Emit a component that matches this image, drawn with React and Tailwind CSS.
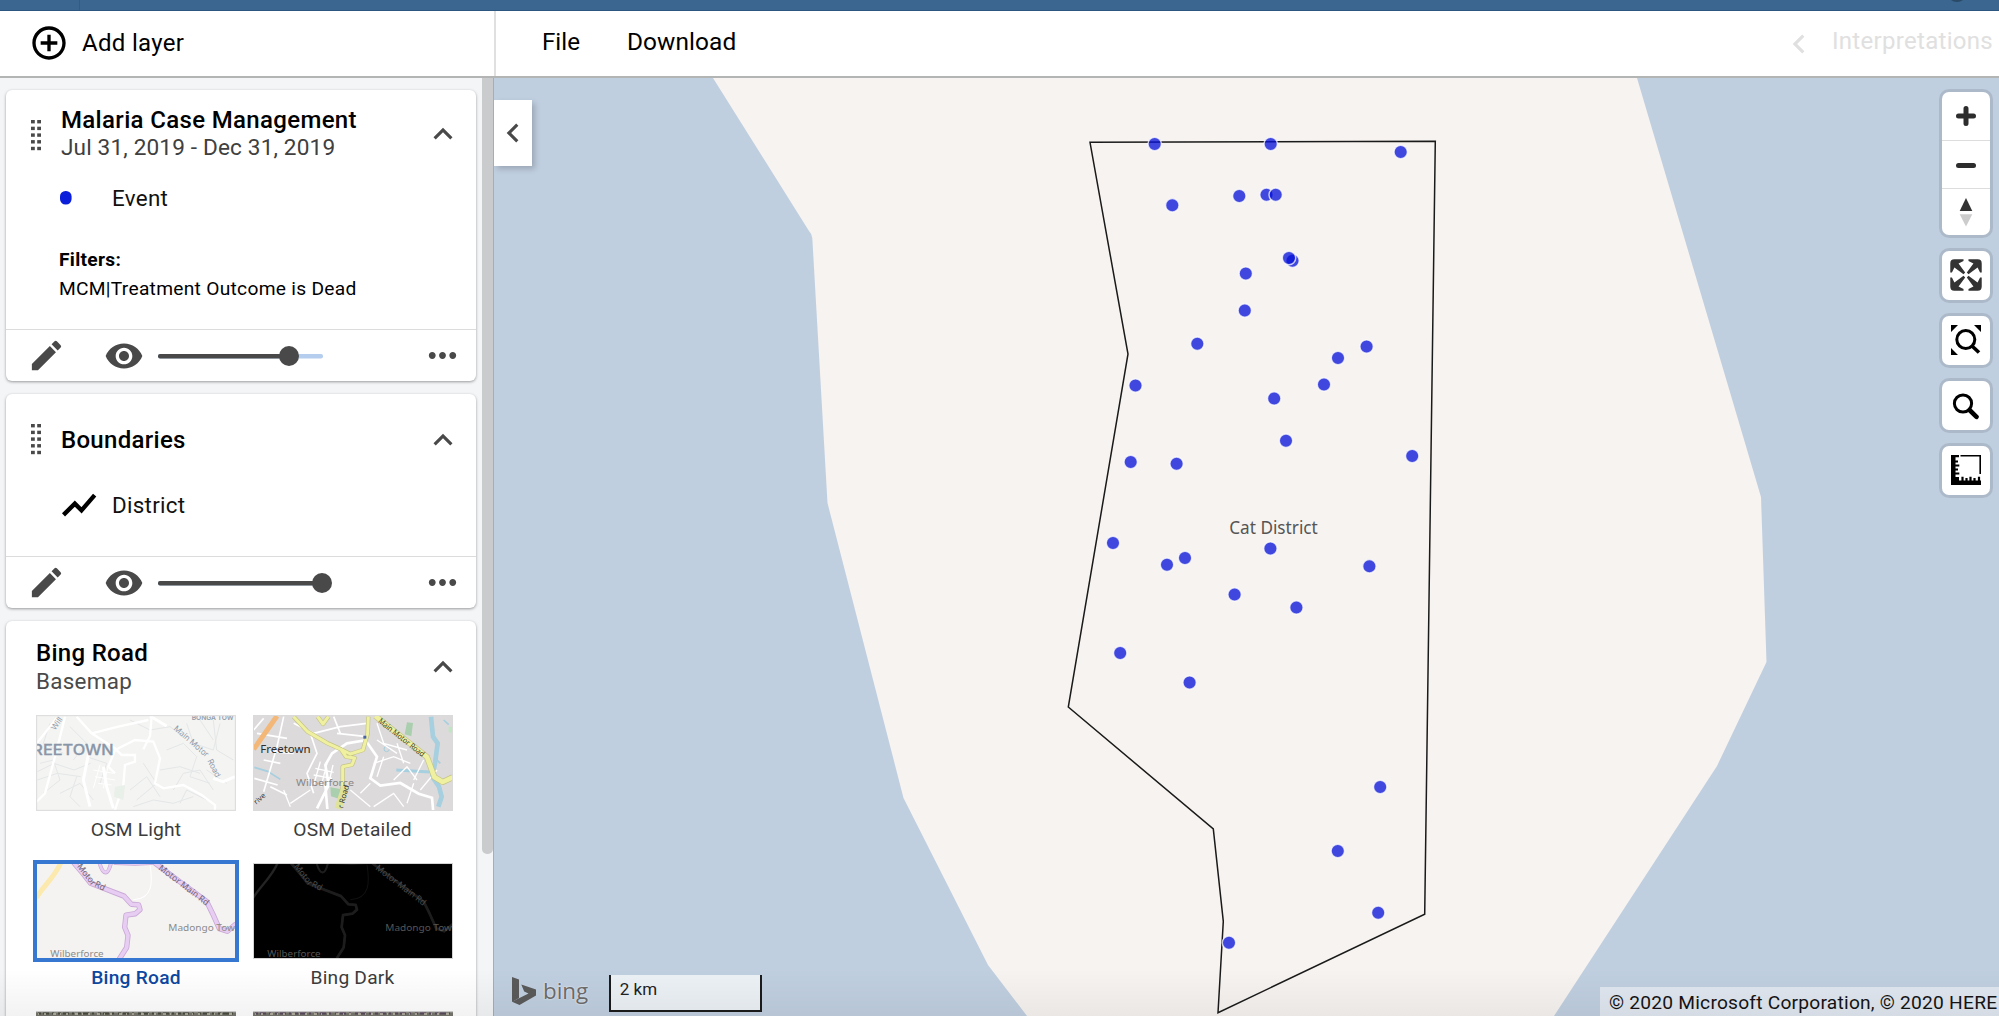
import React from "react";
import {
  MdAddCircleOutline,
  MdCreate,
  MdExpandLess,
  MdChevronLeft,
  MdMoreHoriz,
  MdVisibility,
} from "react-icons/md";

const EVENTS = [
  [1154.7, 144], [1270.7, 144], [1400.7, 152], [1172.3, 205.3], [1239.3, 196],
  [1266.5, 194.7], [1275.7, 194.7], [1292.5, 260.7], [1289, 258], [1245.8, 273.6],
  [1244.8, 310.5], [1197.3, 343.7], [1135.5, 385.6], [1366.6, 346.6], [1338, 358],
  [1324, 384.4], [1274.2, 398.4], [1286, 440.7], [1130.7, 462], [1176.6, 463.7],
  [1412.2, 456], [1113, 543], [1167, 564.8], [1185, 558], [1270.4, 548.6],
  [1369.4, 566.3], [1234.6, 594.4], [1296.4, 607.4], [1120.2, 653], [1189.6, 682.6],
  [1380.2, 787], [1337.8, 851], [1378.2, 912.8], [1229, 942.8],
];

function DragHandle() {
  return (
    <svg width="11" height="32" viewBox="0 0 11 32" fill="#4a4a4a" className="shrink-0">
      {[0, 1, 2, 3, 4].map((r) => (
        <g key={r}>
          <rect x="0" y={r * 6.7} width="3.8" height="3.4" />
          <rect x="6.2" y={r * 6.7} width="3.8" height="3.4" />
        </g>
      ))}
    </svg>
  );
}

function LayerActions({ full }) {
  return (
    <div className="flex h-[52px] items-center border-t border-[#dcdcdc] pl-[21px] pr-[13px] text-[#494949]">
      <MdCreate size={39} />
      <MdVisibility size={40} className="ml-[38px]" />
      <svg width="184" height="24" viewBox="0 0 184 24" className="ml-[12px]">
        <rect x="2" y="10" width="165" height="4.5" rx="2" fill="#b5cdee" />
        <rect x="2" y="10" width={full ? 165 : 132} height="4.5" rx="2" fill="#494949" />
        <circle cx={full ? 166 : 133} cy="12" r="10" fill="#494949" />
      </svg>
      <MdMoreHoriz size={41} className="ml-auto" />
    </div>
  );
}

function Card({ className, children }) {
  return (
    <section className={"flex shrink-0 flex-col rounded-[6px] bg-white shadow-[0_1px_3px_rgba(0,0,0,0.38)] " + className}>
      {children}
    </section>
  );
}

function OsmLight() {
  return (
    <svg viewBox="108 75 600 288" className="h-full w-full" preserveAspectRatio="none">
      <rect x="108" y="75" width="600" height="288" fill="#f4f4f2" />
      <g fill="none" stroke="#e4e7e8" strokeWidth="3">
        <path d="M112 245l50-25 60 20 50-20M112 270l60-20 70 10M120 220l40-10 20 60-50 40M230 260l-20 60 30 30M390 90l60 30 60-10 40 30M500 180l50-20 40 40-20 60 60 20M560 100l20 60 60 20 20-80M600 90l40 60M390 300l50-40 40 60M480 240l60-10 60 20M400 350l60-20 60 10 60-20M620 240l60 40M260 200l60 20-20 60M210 110l50 50-40 50" />
        <path d="M520 300l30-50 50-10 40 60M430 220l40 60-60 50M150 100l-20 60 60 30M540 340l20-40 60 30M640 90l10 90 50 30M180 310l60-30 40 50" />
      </g>
      <g fill="none" stroke="#ffffff" strokeWidth="7">
        <path d="M110 160l60-75M195 80l-30 120-30 110-25 25M230 80l45 50 70 45 20 20 40 0 0 20-30 10-5 60-30 90" />
        <path d="M455 78l-5 60-20 40M275 130l80-20 90-20M345 250l-20-20 20-50 60-30 55 5 20 50-15 75 25 15 60-10 55 30 40 30 0 50" />
        <path d="M450 78l50 30M640 265l30 10 35-15M270 350l-20-80 20-100M310 230l10 60 20 65" strokeWidth="9" />
        <path d="M280 240l60 10M285 260l60 10M295 280l40 5M300 225l-20 70M325 225l-15 70" strokeWidth="3" />
      </g>
      <path d="M345 290l30-5-5 45-28-10z" fill="#e9efe9" />
      <g fill="#8f9bab" fontFamily="Inter, sans-serif">
        <text x="97" y="194" fontSize="43" fontWeight="500" textLength="244" lengthAdjust="spacingAndGlyphs" fill="#8996a8" stroke="#8996a8" strokeWidth="0.8">REETOWN</text>
        <text transform="translate(520 118) rotate(41)" fontSize="24">Main Motor</text>
        <text transform="translate(622 212) rotate(64)" fontSize="24">Road</text>
        <text x="575" y="90" fontSize="20" fontWeight="600">BONGA TOW</text>
        <text transform="translate(165 122) rotate(-55)" fontSize="24">Will</text>
      </g>
      <rect x="109" y="76" width="598" height="286" fill="none" stroke="#dedede" strokeWidth="5" />
    </svg>
  );
}

function OsmDetailed() {
  return (
    <svg viewBox="758 75 600 288" className="h-full w-full" preserveAspectRatio="none">
      <rect x="758" y="75" width="600" height="288" fill="#dddadb" />
      <path d="M1220 97l18 2-5 40-20-6zM990 292l30 5-2 30-26-8z" fill="#a9cfae" />
      <path d="M1345 110l12 0 0 20-12-4z" fill="#bfe6c0" />
      <g fill="none" stroke="#a6cfdf">
        <path d="M1292 80l6 60 14 20-8 60-8 40 20 30 8 30-10 30" strokeWidth="14" />
        <path d="M1188 240l100 6" strokeWidth="9" />
        <path d="M762 232l40 12 38 24" strokeWidth="5" />
        <circle cx="1159" cy="177" r="8" strokeWidth="3" />
        <path d="M1330 90l15 14M1305 205l15 15" strokeWidth="5" />
      </g>
      <g fill="none" stroke="#ffffff" strokeWidth="5">
        <path d="M850 80l-20 90-40 135M790 85l-30 35M770 130l90 15M880 190l-70-5M762 265l70 20M810 290l50 25M840 220l-50-10" strokeWidth="5" />
        <path d="M940 130l80-20 80-10M930 130l20 60-30 60 20 60M880 100l60 30M1010 130l90 10M1000 80l20 50" />
        <path d="M1120 220l60-20 50 20M1150 200l-20 60M1190 160l20 60M1180 270l40-40 30 40M1260 300l50-60M1130 150l60 40M1130 100l20 60 70 20" strokeWidth="4" />
        <path d="M1080 310l30-30M1120 350l60-40 30 40M870 340l60-40M850 300l20 50M1050 300l60 50M1240 280l-20 60M1270 210l-30 60" strokeWidth="4" />
        <path d="M960 215l-20 70M980 220l-18 70M998 225l-14 60M945 235l55 12M940 255l55 10" strokeWidth="4" />
        <path d="M1100 150l-60 10-45 30-20 35 10 60-35 70M975 285l6 72M1095 150l35 50-20 65 30 22 60-8 55 32 40 12 4 45" strokeWidth="8" />
      </g>
      <g fill="none" strokeLinejoin="round">
        <path d="M830 78l-70 100" stroke="#f3b778" strokeWidth="15" />
        <path d="M880 80l42 45 60 35 40 18 28 14 38-12 14-50 2-50M1022 178l15 22 26 4-8 20-28 6 0 60-10 66M952 80l16 22 16-22" stroke="#c4c486" strokeWidth="13" />
        <path d="M880 80l42 45 60 35 40 18 28 14 38-12 14-50 2-50M1022 178l15 22 26 4-8 20-28 6 0 60-10 66M952 80l16 22 16-22" stroke="#f0f1a0" strokeWidth="9" />
        <path d="M1125 78l60 48 95 75 22 60 25 15 30-14" stroke="#c4c486" strokeWidth="18" />
        <path d="M1125 78l60 48 95 75 22 60 25 15 30-14" stroke="#f0f1a0" strokeWidth="14" />
        <path d="M1035 290l-22 66" stroke="#dfe39a" strokeWidth="22" />
      </g>
      <rect x="1089" y="137" width="9" height="9" fill="#4864a8" />
      <g fill="#333" fontFamily="'Noto Sans', sans-serif">
        <text x="780" y="188" fontSize="31" textLength="151" lengthAdjust="spacingAndGlyphs" fill="#2c2c2c">Freetown</text>
        <text x="887" y="288" fontSize="29" textLength="174" lengthAdjust="spacingAndGlyphs" fill="#878787">Wilberforce</text>
        <text transform="translate(1132 96) rotate(38.500)" fontSize="24" textLength="170" lengthAdjust="spacingAndGlyphs" fill="#45452a">Main Motor Road</text>
        <text transform="translate(1028 356) rotate(-75)" fontSize="23">r Road</text>
        <text transform="translate(768 344) rotate(-40)" fontSize="22">rive</text>
      </g>
      <rect x="759" y="76" width="598" height="286" fill="none" stroke="#dadada" strokeWidth="4" />
    </svg>
  );
}

function BingThumb({ dark }) {
  const edge = dark ? "#1d1d1d" : "#c9a9d6";
  const road = dark ? "#1d1d1d" : "#e8cdf3";
  const label = dark ? "#555555" : "#8b8b8b";
  const roads =
    "M222 520l30 35 20 25 100 38 22 24 22 2 4 14-14 12-28 4-4 36 10 24-4 36-22 34M465 520l70 52 85 62 18 36 20 44 24 8 24-20";
  return (
    <svg viewBox="108 520 600 284" className="h-full w-full" preserveAspectRatio="none">
      <rect x="108" y="520" width="600" height="284" fill={dark ? "#000000" : "#f5f3f2"} />
      <path d="M182 520c-20 45-50 65-74 104" fill="none" stroke={dark ? "#242424" : "#fbe9ae"} strokeWidth={dark ? 7 : 15} />
      <path d="M450 525c8 50 10 100-50 104" fill="none" stroke={dark ? "#111111" : "#ffffff"} strokeWidth="3" />
      <g fill="none" strokeLinejoin="round" strokeLinecap="round">
        <path d={roads} stroke={edge} strokeWidth={dark ? 8 : 16} />
        <path d="M298 518c6 22 12 30 19 30s12-12 16-28M345 520l60 2 50-2" stroke={edge} strokeWidth={dark ? 6 : 12} />
        <path d={roads} stroke={road} strokeWidth={dark ? 6 : 11} />
        <path d="M298 518c6 22 12 30 19 30s12-12 16-28M345 520l60 2 50-2" stroke={road} strokeWidth={dark ? 4 : 8} />
      </g>
      <g fontFamily="'Noto Sans', sans-serif" fill={label}>
        <g fill={dark ? "#4a4a4a" : "#6f6675"} fontSize="26">
          <text transform="translate(230 530) rotate(52)">Motor</text>
          <text transform="translate(282 588) rotate(27)">Rd</text>
          <text transform="translate(474 538) rotate(37)">Motor Main Rd</text>
        </g>
        <text x="505" y="720" fontSize="27" textLength="200" lengthAdjust="spacingAndGlyphs">Madongo Tow</text>
        <text x="151" y="798" fontSize="27" textLength="160" lengthAdjust="spacingAndGlyphs">Wilberforce</text>
      </g>
      {dark && <rect x="109" y="521" width="598" height="282" fill="none" stroke="#d4d4d4" strokeWidth="4" />}
    </svg>
  );
}

function Satellite({ alt }) {
  return (
    <svg viewBox="0 0 200 10" className="h-full w-full" preserveAspectRatio="none">
      <rect width="200" height="10" fill="#77766d" />
      <path d="M2 2h195" stroke={alt ? "#57495a" : "#474a3c"} strokeWidth="3" strokeDasharray="3 2 6 3 2 4" />
      <path d="M2 3h195" stroke="#c4bfae" strokeWidth="1.5" strokeDasharray="1 5 2 7 3 4" />
      <path d="M0 0.7h200" stroke="#cfcfcf" strokeWidth="1.2" />
    </svg>
  );
}

function Basemap({ name, selected, children }) {
  return (
    <div className="flex w-[200px] flex-col">
      <div className={selected ? "h-[96px] bg-[#3577d1] outline-[4px] -outline-offset-1 outline-[#3577d1] outline-solid" : "h-[96px]"}>
        {children}
      </div>
      <div
        className={
          selected
            ? "pt-[6px] text-center text-[19.2px] leading-[26px] font-medium tracking-[0.25px] text-[#0d47a1]"
            : "pt-[6px] text-center text-[19.2px] leading-[26px] tracking-[0.2px] text-[#3c3c3c]"
        }
      >
        {name}
      </div>
    </div>
  );
}

function Sidebar() {
  return (
    <aside className="flex w-[494px] shrink-0 overflow-hidden border-r border-[#a9adb0] bg-[#f3f5f7]">
      <div className="flex w-[482px] shrink-0 flex-col gap-[13px] pt-[12px] pr-[6px] pl-[6px]">
        <Card className="h-[291px]">
          <div className="flex items-start pt-[16px] pr-[14px] pl-[25px]">
            <div className="pt-[14px]">
              <DragHandle />
            </div>
            <div className="ml-[19px] flex flex-col">
              <h2 className="text-[24px] leading-[28px] font-medium tracking-[0.34px] text-black">Malaria Case Management</h2>
              <p className="text-[22.6px] leading-[27px] tracking-[0.15px] text-[#404040]">Jul 31, 2019 - Dec 31, 2019</p>
            </div>
            <MdExpandLess size={38} className="mt-[9px] ml-auto text-[#494949]" />
          </div>
          <div className="flex items-center pt-[23px] pl-[54px] text-[22.4px] leading-[28px] tracking-[0.3px] text-[#111]">
            <svg width="12" height="14" viewBox="0 0 12 14">
              <rect width="11.6" height="13.6" rx="5.5" fill="#0b1fdb" />
            </svg>
            <span className="ml-[40px]">Event</span>
          </div>
          <div className="flex flex-1 flex-col pt-[34px] pl-[53px] text-[19.2px] leading-[28.5px] tracking-[0.28px] text-black">
            <span className="font-bold">Filters:</span>
            <span>MCM|Treatment Outcome is Dead</span>
          </div>
          <LayerActions />
        </Card>

        <Card className="h-[214px]">
          <div className="flex items-center pt-[27px] pr-[14px] pl-[25px]">
            <DragHandle />
            <h2 className="ml-[19px] text-[24px] leading-[38px] font-medium tracking-[0.3px] text-black">Boundaries</h2>
            <MdExpandLess size={38} className="ml-auto text-[#494949]" />
          </div>
          <div className="flex flex-1 items-start pt-[26px] pl-[53px] text-[22.4px] leading-[40px] tracking-[0.3px] text-[#111]">
            <svg width="40" height="40" viewBox="0 0 24 24" fill="none" stroke="#000" strokeWidth="2.6">
              <path d="M2.700 17.900L9.500 11.200l4 4L21.400 6.100" />
            </svg>
            <span className="ml-[13px]">District</span>
          </div>
          <LayerActions full />
        </Card>

        <Card className="h-[420px]">
          <div className="flex items-start pt-[18px] pr-[14px] pl-[30px]">
            <div className="flex flex-col">
              <h2 className="text-[24px] leading-[28px] font-medium tracking-[0.3px] text-black">Bing Road</h2>
              <p className="text-[22.4px] leading-[28px] tracking-[0.3px] text-[#494949]">Basemap</p>
            </div>
            <MdExpandLess size={38} className="mt-[9px] ml-auto text-[#494949]" />
          </div>
          <div className="grid grid-cols-[200px_200px] gap-x-[16.5px] gap-y-[20px] pt-[20px] pl-[30px]">
            <Basemap name="OSM Light"><OsmLight /></Basemap>
            <Basemap name="OSM Detailed"><OsmDetailed /></Basemap>
            <Basemap name="Bing Road" selected><BingThumb /></Basemap>
            <Basemap name="Bing Dark"><BingThumb dark /></Basemap>
            <div className="h-[10px]"><Satellite /></div>
            <div className="h-[10px]"><Satellite alt /></div>
          </div>
        </Card>
      </div>
      <div className="h-[776px] w-[11px] shrink-0 rounded-b-[5px] bg-[#c9cbcc]" />
    </aside>
  );
}

function Control({ children }) {
  return (
    <button className="flex h-[48.5px] w-[48.5px] items-center justify-center rounded-[7px] bg-white shadow-[0_0_0_3px_rgba(0,0,0,0.1)]">
      {children}
    </button>
  );
}

function MapControls() {
  return (
    <div className="absolute top-[14px] right-[9px] flex flex-col gap-[16.5px]">
      <div className="flex h-[142.5px] w-[48.5px] flex-col divide-y divide-[#dddddd] rounded-[7px] bg-white shadow-[0_0_0_3px_rgba(0,0,0,0.1)]">
        <div className="flex h-[49px] items-center justify-center">
          <svg width="22" height="22" viewBox="0 0 22 22" stroke="#2d2d2d" strokeWidth="5" strokeLinecap="round">
            <path d="M3.5 11h15M11 3.5v15" />
          </svg>
        </div>
        <div className="flex h-[48px] items-center justify-center">
          <svg width="22" height="22" viewBox="0 0 22 22" stroke="#2d2d2d" strokeWidth="5" strokeLinecap="round">
            <path d="M3.5 11.5h15" />
          </svg>
        </div>
        <div className="flex flex-1 items-center justify-center">
          <svg width="14" height="30" viewBox="0 0 14 30">
            <path d="M7 1l6.3 13H.7z" fill="#333" />
            <path d="M7 29.5L13.3 17.3H.7z" fill="#ccc" />
          </svg>
        </div>
      </div>
      <Control>
        <svg width="48" height="48" viewBox="0 0 29 29" fill="#333">
          <path d="M24 16v5.5c0 1.75-.75 2.5-2.5 2.5H16v-1l3-1.5-4-5.5 1-1 5.5 4 1.5-3h1zM6 16l1.5 3 5.5-4 1 1-4 5.5 3 1.5v1H7.5C5.75 24 5 23.25 5 21.5V16h1zm7-11v1l-3 1.5 4 5.5-1 1-5.5-4L6 13H5V7.5C5 5.75 5.75 5 7.5 5H13zm11 2.5c0-1.75-.75-2.5-2.5-2.5H16v1l3 1.5-4 5.5 1 1 5.5-4 1.5 3h1V7.5z" />
        </svg>
      </Control>
      <Control>
        <svg width="30" height="30" viewBox="0 0 30 30">
          <path d="M0 0h7L0 7zM23 0h7v7zM0 23l7 7H0z" />
          <circle cx="14.8" cy="14.5" r="9" fill="none" stroke="#000" strokeWidth="3" />
          <path d="M21 21l7 6.5" stroke="#000" strokeWidth="3.6" />
        </svg>
      </Control>
      <Control>
        <svg width="30" height="30" viewBox="0 0 30 30">
          <circle cx="12" cy="13.5" r="8.6" fill="none" stroke="#000" strokeWidth="3" />
          <path d="M18.5 20l7 6.8" stroke="#000" strokeWidth="4.6" strokeLinecap="round" />
        </svg>
      </Control>
      <Control>
        <svg width="30" height="30" viewBox="0 0 30 30">
          <path d="M0 0h8v2.2H4.5V30H0zM0 25.5h30V30H0zM0 22h8v8H0z" />
          <path d="M4 6.5h3M4 10.5h4.3M4 14.5h3M4 18.5h4.3M11.5 26v-4.3M15.5 26v-3M19.5 26v-4.3M23.5 26v-3M28 26v-4.3" stroke="#000" strokeWidth="2.2" />
          <path d="M9.5 .8h19.7V19" fill="none" stroke="#000" strokeWidth="1.6" />
        </svg>
      </Control>
    </div>
  );
}

function MapView() {
  return (
    <main className="relative flex-1 overflow-hidden bg-[#c0cfe0]">
      <svg viewBox="494 78 1505 938" className="block h-[938px] w-[1505px]">
        <path
          d="M713 78L809 231Q812 234 812.300 238L827.500 503L903.500 798L988 965L1027 1016H1554L1717 766L1766.500 662L1761 497L1637 78Z"
          fill="#f7f3f0"
        />
        <path
          d="M1090 142.300L1435.300 141.300L1424.700 914.300L1218 1012.700L1223.300 921.300L1213.300 829L1068.300 707L1128 354Z"
          fill="none"
          stroke="#1a1a1a"
          strokeWidth="1.5"
        />
        {EVENTS.map(([x, y], i) => (
          <circle key={i} cx={x} cy={y} r="6.7" fill="#0611d8" fillOpacity="0.76" stroke="#ffffff" strokeOpacity="0.75" strokeWidth="1.4" />
        ))}
        <text x="1273.5" y="533.5" textAnchor="middle" fontSize="17.2" fontFamily="'Noto Sans', sans-serif" fill="#555555">
          Cat District
        </text>
      </svg>
      <div className="absolute top-[22px] left-0 flex h-[66px] w-[38px] items-center justify-center bg-white pr-[1px] shadow-[3px_3px_6px_rgba(0,0,0,0.2)]">
        <MdChevronLeft size={38} color="#494949" className="shrink-0" />
      </div>
      <MapControls />
      <div className="absolute bottom-0 left-[17px] flex h-[41px] items-start">
        <svg width="27" height="30" viewBox="-1 -1 27 30" className="mt-[1px]" fill="#5a5a5a">
          <path d="M0 0l7 2.5V21l-7 4z" />
          <path d="M9.3 7.5L24 12.5v6L7.5 28 0 24.8 16.5 16.5l-4.3-2z" />
        </svg>
        <span className="ml-[5px] text-[22.4px] leading-[32px] text-[#6c6c6c] [font-family:'Open_Sans',sans-serif] [text-shadow:0_0_2px_#fff]">bing</span>
        <div className="ml-[20.5px] h-[37px] w-[153px] border-x-[2.5px] border-b-[2.5px] border-[#1b1b1b] bg-white/70 pl-[9px] text-[17px] leading-[29px] text-[#222]">
          2 km
        </div>
      </div>
      <div className="absolute right-0 bottom-0 h-[29px] w-[399px] overflow-hidden bg-white/50 pl-[9px] text-[19.2px] leading-[31px] tracking-[0.22px] whitespace-nowrap text-[#141414]">
        © 2020 Microsoft Corporation, © 2020 HERE
      </div>
    </main>
  );
}

export default function App() {
  return (
    <div className="relative flex h-[1016px] w-[1999px] flex-col overflow-hidden bg-white [font-family:Roboto,sans-serif]">
      <div className="flex h-[11px] shrink-0 overflow-hidden border-b border-[#2c5680] bg-[#3a6690]">
        <div className="w-[80px] border-r border-[#325c85]" />
        <div className="mt-[-18px] mr-[32px] ml-auto h-[20px] w-[20px] rounded-full bg-[#2a4a68]" />
      </div>
      <header className="flex h-[67px] shrink-0 items-stretch border-b-2 border-[#b3b5b5] text-[24px] text-black">
        <div className="flex w-[496px] items-center border-r-2 border-[#e0e0e0] pb-[1px] pl-[29px]">
          <MdAddCircleOutline size={40} />
          <span className="ml-[13px] pb-[1px] tracking-[0.3px]">Add layer</span>
        </div>
        <nav className="flex flex-1 items-center pb-[2px] pl-[46px]">
          <span className="text-[24.2px]">File</span>
          <span className="ml-[47px] text-[24.4px] tracking-[0.1px]">Download</span>
        </nav>
        <div className="flex items-center pr-[6px] text-[#e0e0e0]">
          <MdChevronLeft size={38} />
          <span className="ml-[14px] pb-[6px] tracking-[0.3px]">Interpretations</span>
        </div>
      </header>
      <div className="flex h-[938px]">
        <Sidebar />
        <MapView />
      </div>
      <div className="pointer-events-none absolute bottom-0 left-0 h-[48px] w-full bg-gradient-to-b from-transparent to-black/5" />
    </div>
  );
}
